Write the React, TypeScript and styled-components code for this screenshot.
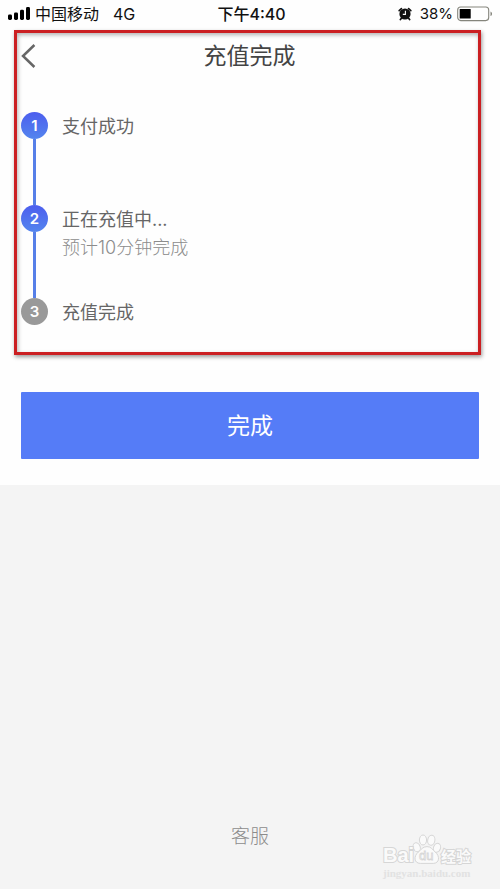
import React from "react";
import styled, { createGlobalStyle } from "styled-components";

const GlobalStyle = createGlobalStyle`
  * { box-sizing: border-box; }
  body {
    margin: 0;
    background: #f4f4f4;
    font-family: Inter, "Noto Sans CJK SC", sans-serif;
  }
`;

const Page = styled.div`
  position: relative;
  display: flex;
  flex-direction: column;
  min-height: 100vh;
  background: #f4f4f4;
`;

const Panel = styled.main`
  display: flex;
  flex-direction: column;
  padding-bottom: 26px;
  background: #fefefe;
`;

const StatusBar = styled.div`
  display: grid;
  grid-template-columns: 1fr auto 1fr;
  align-items: center;
  height: 30px;
  padding: 0 7px 2px 8px;
  color: #111;
  font-size: 16px;
  line-height: 24px;
`;

const StatusGroup = styled.div<{ $end?: boolean }>`
  display: flex;
  align-items: center;
  justify-content: ${(p) => (p.$end ? "flex-end" : "flex-start")};
  gap: 4px;
`;

const Network = styled.span`
  margin-left: 10px;
`;

const Clock = styled.time`
  padding-left: 2px;
  font-weight: 500;
`;

const Percent = styled.span`
  margin-left: 4px;
  font-size: 15px;
`;

const Frame = styled.section`
  margin: 0 19px 0 14px;
  padding-bottom: 24px;
  border: 3px solid #cb1f22;
  box-shadow: 1px 2px 4px rgba(0, 0, 0, 0.4), inset 1px 2px 4px rgba(0, 0, 0, 0.3);
`;

const Header = styled.header`
  display: grid;
  grid-template-columns: 28px 1fr 24px;
  align-items: center;
  height: 46px;
`;

const BackButton = styled.button`
  display: flex;
  padding: 4px;
  border: 0;
  background: none;
  color: #666;
`;

const Title = styled.h1`
  margin: 0;
  color: #444;
  font-size: 23px;
  line-height: 34px;
  font-weight: 400;
  text-align: center;
`;

const Steps = styled.ol`
  margin: 0;
  padding: 33px 4px 0;
  list-style: none;
`;

const Step = styled.li`
  display: grid;
  grid-template-columns: 27px 1fr;
  column-gap: 14px;
  min-height: 93px;

  &:last-child { min-height: 0; }
`;

const Rail = styled.div`
  display: flex;
  flex-direction: column;
  align-items: center;
`;

const Badge = styled.span<{ $pending?: boolean }>`
  display: flex;
  align-items: center;
  justify-content: center;
  width: 27px;
  height: 27px;
  border-radius: 50%;
  background: ${(p) => (p.$pending ? "#999" : "linear-gradient(#4c5eee, #5485ee)")};
  color: #fff;
  font-size: 15px;
  line-height: 20px;
  font-weight: 600;
`;

const Connector = styled.span`
  flex: 1;
  width: 3px;
  background: #567fe8;
`;

const StepLabel = styled.div`
  color: #666;
  font-size: 18px;
  line-height: 30px;
`;

const StepNote = styled.div`
  color: #8c8c8c;
  font-size: 18px;
  line-height: 26px;
  font-weight: 300;
`;

const DoneButton = styled.button`
  height: 67px;
  margin: 37px 21px 0;
  border: 0;
  border-radius: 1px;
  background: #557cf7;
  color: #fff;
  font-family: inherit;
  font-size: 23px;
  line-height: 32px;
`;

const Footer = styled.footer`
  display: flex;
  justify-content: center;
  margin-top: auto;
  padding-bottom: 38px;
`;

const SupportLink = styled.a`
  color: #8c8c8c;
  font-size: 19px;
  line-height: 28px;
  font-weight: 300;
  text-decoration: none;
`;

const Watermark = styled.div`
  position: absolute;
  right: 20px;
  bottom: 8px;
  display: flex;
`;

const SignalIcon = () => (
  <svg width="23" height="16" viewBox="0 0 23 16" fill="#000" aria-hidden="true">
    <rect x="0" y="8.6" width="4" height="5.4" rx="1.4" />
    <rect x="6" y="6.4" width="4" height="7.6" rx="1.4" />
    <rect x="12" y="3.8" width="4" height="10.2" rx="1.4" />
    <rect x="18" y="1" width="4" height="13" rx="1.4" />
  </svg>
);

const AlarmIcon = () => (
  <svg width="14" height="14" viewBox="0 0 14 14" fill="none" aria-hidden="true">
    <circle cx="7" cy="7" r="5.6" fill="#111" />
    <path d="M1.2 3.6 3.4 1.6M10.6 1.6l2.2 2M3.4 11.2 2.4 12.6M10.6 11.2l1 1.4" stroke="#111" strokeWidth="1.7" strokeLinecap="round" />
    <path d="M7.4 3.8v3.6H4.8" stroke="#fff" strokeWidth="1.1" />
  </svg>
);

const BatteryIcon = () => (
  <svg width="36" height="16" viewBox="0 0 36 16" aria-hidden="true">
    <rect x=".7" y="1" width="31" height="13.6" rx="3" fill="#fff" stroke="#85857c" strokeWidth="1.1" />
    <rect x="2.7" y="3" width="11" height="9.6" rx=".5" fill="#000" />
    <path d="M33.5 5.5c2 .8 2 3.8 0 4.6z" fill="#85857c" />
  </svg>
);

const BackIcon = () => (
  <svg width="15" height="26" viewBox="0 0 15 26" fill="none" aria-hidden="true">
    <path d="M13.4 2 2 13l11.4 11" stroke="currentColor" strokeWidth="2.5" />
  </svg>
);

const WatermarkLogo = () => (
  <svg width="98" height="50" viewBox="0 0 98 50" aria-label="Baidu 经验">
    <g fill="#fafafa" stroke="#d6d6d6" strokeWidth="1">
      <ellipse cx="34.7" cy="16.2" rx="3.5" ry="4.6" transform="rotate(-20 34.7 16.2)" />
      <ellipse cx="41" cy="9" rx="3.6" ry="5" />
      <ellipse cx="49.3" cy="9.2" rx="3.6" ry="5" transform="rotate(10 49.3 9.2)" />
      <ellipse cx="55" cy="16.8" rx="3.5" ry="4.6" transform="rotate(20 55 16.8)" />
      <path d="M45 15.6c4.4 0 5.2 3 8.2 5.4 5 4 4.4 11.4-2 11.4H38.4c-6.6 0-7-7.4-2-11.4 3-2.4 4.2-5.4 8.6-5.4z" />
      <g paintOrder="stroke" strokeWidth="2" fontFamily='"Liberation Sans", "Noto Sans CJK SC", sans-serif' fontWeight="700">
        <text x="1" y="31" fontSize="20">Bai</text>
        <text x="59" y="31" fontSize="15">经验</text>
      </g>
      <text x="37" y="29" fontSize="13" strokeWidth=".8" fontFamily='"Liberation Sans", sans-serif'>du</text>
    </g>
    <text x="1" y="46" fontSize="11" fill="#e2e2e2" fontFamily='"Liberation Serif", serif' fontWeight="700">jingyan.baidu.com</text>
  </svg>
);

const steps = [
  { label: "支付成功" },
  { label: "正在充值中...", note: "预计10分钟完成" },
  { label: "充值完成", pending: true },
];

export default function App() {
  return (
    <Page>
      <GlobalStyle />
      <Panel>
        <StatusBar>
          <StatusGroup>
            <SignalIcon />
            <span>中国移动</span>
            <Network>4G</Network>
          </StatusGroup>
          <Clock>下午4:40</Clock>
          <StatusGroup $end>
            <AlarmIcon />
            <Percent>38%</Percent>
            <BatteryIcon />
          </StatusGroup>
        </StatusBar>
        <Frame>
          <Header>
            <BackButton type="button" aria-label="返回">
              <BackIcon />
            </BackButton>
            <Title>充值完成</Title>
          </Header>
          <Steps>
            {steps.map((step, i) => (
              <Step key={step.label}>
                <Rail>
                  <Badge $pending={step.pending}>{i + 1}</Badge>
                  {i < steps.length - 1 && <Connector />}
                </Rail>
                <div>
                  <StepLabel>{step.label}</StepLabel>
                  {step.note && <StepNote>{step.note}</StepNote>}
                </div>
              </Step>
            ))}
          </Steps>
        </Frame>
        <DoneButton type="button">完成</DoneButton>
      </Panel>
      <Footer>
        <SupportLink href="#support">客服</SupportLink>
      </Footer>
      <Watermark>
        <WatermarkLogo />
      </Watermark>
    </Page>
  );
}
